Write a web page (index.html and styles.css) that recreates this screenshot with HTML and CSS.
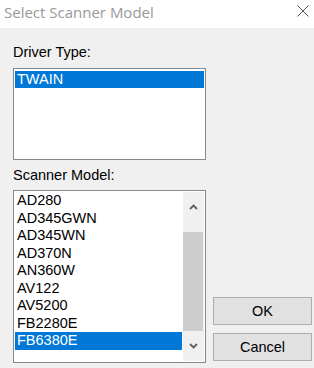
FILE: index.html
```html
<!DOCTYPE html>
<html>
<head>
<meta charset="utf-8">
<link rel="stylesheet" href="styles.css">
</head>
<body>
<div class="titlebar">
  <span class="title">Select Scanner Model</span>
  <svg class="close" width="12" height="12" viewBox="0 0 12 12"><path d="M0.5 0.5 L11.5 11.5 M11.5 0.5 L0.5 11.5" stroke="#555" stroke-width="1" fill="none"/></svg>
</div>
<div class="content">
  <div class="left">
    <div class="label label-driver">Driver Type:</div>
    <div class="listbox list-driver">
      <div class="item selected">TWAIN</div>
    </div>
    <div class="label label-model">Scanner Model:</div>
    <div class="listbox list-model">
      <div class="items">
        <div class="item">AD280</div>
        <div class="item">AD345GWN</div>
        <div class="item">AD345WN</div>
        <div class="item">AD370N</div>
        <div class="item">AN360W</div>
        <div class="item">AV122</div>
        <div class="item">AV5200</div>
        <div class="item">FB2280E</div>
        <div class="item selected">FB6380E</div>
      </div>
      <div class="scrollbar">
        <div class="arrow"><svg width="9" height="6" viewBox="0 0 9 6"><path d="M1 5 L4.5 1.5 L8 5" stroke="#606060" stroke-width="1.8" fill="none"/></svg></div>
        <div class="track"><div class="thumb"></div></div>
        <div class="arrow"><svg width="9" height="6" viewBox="0 0 9 6"><path d="M1 1 L4.5 4.5 L8 1" stroke="#606060" stroke-width="1.8" fill="none"/></svg></div>
      </div>
    </div>
  </div>
  <div class="right">
    <button class="btn btn-ok">OK</button>
    <button class="btn btn-cancel">Cancel</button>
  </div>
</div>
</body>
</html>
```
FILE: styles.css
```css
html, body {
  margin: 0;
  padding: 0;
  background: #f0f0f0;
  width: 314px;
  height: 368px;
  overflow: hidden;
}
body {
  font-family: "Liberation Sans", Arial, sans-serif;
  font-size: 14.5px;
  color: #000;
}
.titlebar {
  box-sizing: border-box;
  height: 28px;
  background: #fff;
  display: flex;
  align-items: flex-start;
  justify-content: space-between;
  padding: 0 5px 0 4px;
}
.title {
  font-family: "Open Sans", "Noto Sans", sans-serif;
  font-size: 15px;
  line-height: 24px;
  color: #999;
}
.close {
  margin-top: 5px;
}
.content {
  display: flex;
  padding-left: 13px;
}
.left {
  width: 193px;
  display: flex;
  flex-direction: column;
}
.label {
  line-height: 16px;
  height: 16px;
}
.label-driver {
  margin-top: 16px;
}
.label-model {
  margin-top: 7px;
}
.listbox {
  box-sizing: border-box;
  border: 1px solid #828790;
  background: #fff;
  margin-top: 8px;
  padding: 1px;
}
.list-driver {
  height: 92px;
}
.list-model {
  margin-top: 7px;
  height: 173px;
  display: flex;
}
.items {
  flex: 1;
  overflow: hidden;
}
.item {
  height: 17.5px;
  line-height: 17.5px;
  padding-left: 2px;
  white-space: nowrap;
}
.list-driver .item {
  height: 17px;
  line-height: 17px;
  margin-top: 1px;
}
.selected {
  background: #0078d7;
  color: #fff;
}
.scrollbar {
  width: 21px;
  margin-left: 1px;
  background: #f0f0f0;
  display: flex;
  flex-direction: column;
}
.arrow {
  height: 30px;
  display: flex;
  align-items: center;
  justify-content: center;
}
.track {
  flex: 1;
  display: flex;
  flex-direction: column;
  justify-content: flex-end;
}
.thumb {
  height: 99px;
  background: #cdcdcd;
  margin: 0 1px 0 0;
}
.right {
  display: flex;
  flex-direction: column;
  justify-content: flex-end;
  margin-left: 7px;
  padding-bottom: 2px;
  gap: 8px;
}
.btn {
  box-sizing: border-box;
  width: 99px;
  height: 28px;
  background: #e1e1e1;
  border: 1px solid #adadad;
  font-family: "Liberation Sans", Arial, sans-serif;
  font-size: 14.5px;
  color: #000;
  padding: 0;
  margin: 0;
}
```
